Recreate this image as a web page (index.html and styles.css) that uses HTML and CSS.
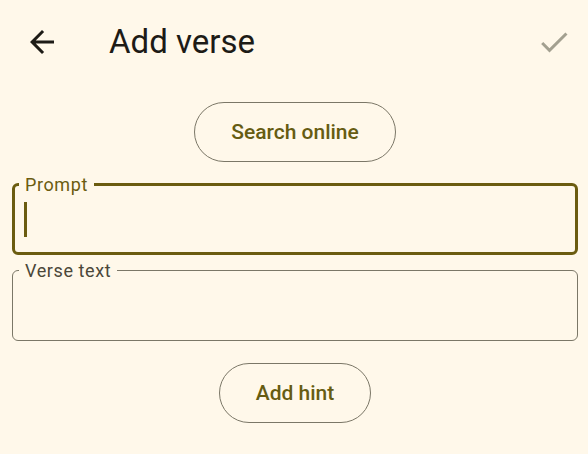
FILE: index.html
```html
<!DOCTYPE html>
<html>
<head>
<meta charset="utf-8">
<link rel="stylesheet" href="styles.css">
</head>
<body>
<div class="screen">
  <header class="topbar">
    <div class="icon-btn back">
      <svg viewBox="0 0 24 24" width="36" height="36"><path d="M20 11H7.83l5.59-5.59L12 4l-8 8 8 8 1.41-1.41L7.83 13H20v-2z" fill="#1d1b16"/></svg>
    </div>
    <h1 class="title">Add verse</h1>
    <div class="icon-btn check">
      <svg viewBox="0 0 24 24" width="36" height="36"><path d="M9 16.17L4.83 12l-1.42 1.41L9 19 21 7l-1.41-1.41z" fill="#a3a090"/></svg>
    </div>
  </header>
  <div class="btn-row first"><button class="outlined-btn">Search online</button></div>
  <fieldset class="field focused">
    <legend>Prompt</legend>
    <div class="field-body"><div class="cursor"></div></div>
  </fieldset>
  <fieldset class="field">
    <legend>Verse text</legend>
    <div class="field-body"></div>
  </fieldset>
  <div class="btn-row second"><button class="outlined-btn">Add hint</button></div>
</div>
</body>
</html>
```
FILE: styles.css
```css
html, body {
  margin: 0;
  padding: 0;
  background: #fff8ea;
}
body {
  font-family: Roboto, "Liberation Sans", sans-serif;
  width: 588px;
  height: 454px;
  overflow: hidden;
}
.screen {
  display: flex;
  flex-direction: column;
}
.topbar {
  height: 84px;
  display: flex;
  align-items: center;
}
.icon-btn {
  width: 36px;
  height: 36px;
  display: flex;
}
.back {
  margin-left: 24px;
}
.title {
  margin: 0 0 0 49px;
  font-size: 33px;
  font-weight: 400;
  color: #1d1b16;
  flex: 1;
  line-height: 38px;
}
.check {
  margin-right: 16px;
}
.btn-row {
  display: flex;
  justify-content: center;
}
.btn-row.first {
  margin-top: 18px;
  padding-left: 2px;
}
.btn-row.second {
  margin-top: 22px;
  padding-left: 2px;
}
.outlined-btn {
  height: 60px;
  padding: 0 36px;
  border: 1px solid #7b7767;
  border-radius: 30px;
  background: transparent;
  font-family: Roboto, "Liberation Sans", sans-serif;
  font-size: 21px;
  font-weight: 500;
  color: #665c12;
}
.field {
  margin: 12px 10px 0 12px;
  padding: 0;
  border: 1px solid #7b7767;
  border-radius: 6px;
  min-width: 0;
}
.field + .field {
  margin-top: 5px;
}
.field legend {
  margin-left: 6px;
  padding: 0 6px;
  font-size: 18px;
  line-height: 21px;
  letter-spacing: 0.6px;
  color: #4b4739;
}
.field-body {
  height: 59px;
  display: flex;
  align-items: flex-start;
}
.field.focused {
  border: 3px solid #6b5c10;
}
.field.focused legend {
  margin-left: 4px;
  color: #6b5c10;
}
.field.focused .field-body {
  height: 57px;
}
.cursor {
  width: 3px;
  height: 35px;
  margin: 7px 0 0 9px;
  background: #6b5c10;
}
```
